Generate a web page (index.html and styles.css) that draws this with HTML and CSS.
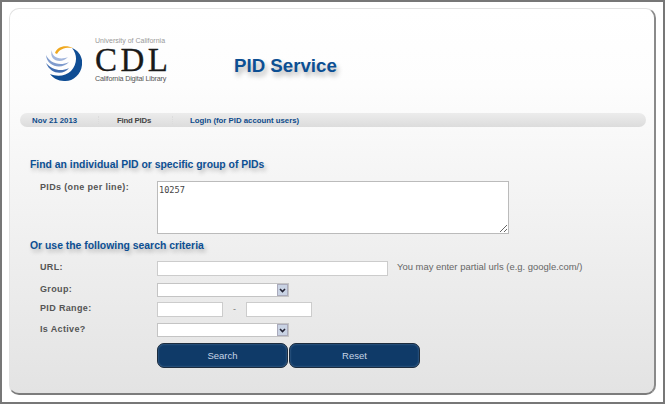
FILE: index.html
```html
<!DOCTYPE html>
<html lang="en">
<head>
    <meta charset="UTF-8">
    <meta name="viewport" content="width=device-width, initial-scale=1.0">
    <title>PID Service</title>
    <link rel="stylesheet" href="styles.css">
</head>
<body>

    <div class="frame">
        <div class="card">
            <div class="header">
                <div class="logo">
                    <svg class="logo-mark" width="37" height="37" viewBox="0 0 37 37">
                        <path d="M10 8 C12 2 20 -1 28 3 C22 2 15 3 12 9 Z" fill="#f0a81e"/>
                        <path d="M27 3 C35 6 38 14 37 20 C36 30 27 37 19 36 C13 36 8 33 5 29 C12 32 21 31 26 26 C32 20 33 10 27 3 Z" fill="#0f4d94"/>
                        <path d="M1 18 C7 25 16 27 24 23 C19 30 6 30 1 18 Z" fill="#3f6cb0"/>
                        <path d="M1 10 C4 17 14 22 24 17 C17 25 2 22 1 10 Z" fill="#7f9bcd"/>
                        <path d="M7 5 C6 11 14 16 23 12 C16 20 3 15 7 5 Z" fill="#a3b6dc"/>
                    </svg>
                    <div class="logo-text">
                        <div class="logo-top">University of California</div>
                        <div class="logo-name">CDL</div>
                        <div class="logo-bottom">California Digital Library</div>
                    </div>
                </div>
                <h1>PID Service</h1>
            </div>

            <div class="nav">
                <span class="nav-date">Nov 21 2013</span>
                <span class="sep"></span>
                <span class="nav-dark">Find PIDs</span>
                <span class="sep"></span>
                <a href="#">Login (for PID account users)</a>
            </div>

            <form class="search">
                <h2>Find an individual PID or specific group of PIDs</h2>
                <div class="row row-area">
                    <label for="pids">PIDs (one per line):</label>
                    <textarea id="pids">10257</textarea>
                </div>

                <h2 class="second">Or use the following search criteria</h2>
                <div class="row row-url">
                    <label for="url">URL:</label>
                    <input type="text" id="url" class="input-url">
                    <span class="hint">You may enter partial urls (e.g. google.com/)</span>
                </div>
                <div class="row row-group">
                    <label for="group">Group:</label>
                    <div class="select-box">
                        <select id="group"></select>
                        <span class="arrow"><svg width="7" height="5" viewBox="0 0 7 5"><path d="M1 1 L3.5 3.5 L6 1" fill="none" stroke="#223" stroke-width="1.6"/></svg></span>
                    </div>
                </div>
                <div class="row row-range">
                    <label for="from">PID Range:</label>
                    <input type="text" id="from" class="input-range">
                    <span class="dash">-</span>
                    <input type="text" id="to" class="input-range">
                </div>
                <div class="row row-active">
                    <label for="active">Is Active?</label>
                    <div class="select-box">
                        <select id="active"></select>
                        <span class="arrow"><svg width="7" height="5" viewBox="0 0 7 5"><path d="M1 1 L3.5 3.5 L6 1" fill="none" stroke="#223" stroke-width="1.6"/></svg></span>
                    </div>
                </div>
                <div class="buttons">
                    <button type="button" class="btn">Search</button>
                    <button type="reset" class="btn">Reset</button>
                </div>
            </form>
        </div>
    </div>

</body>
</html>
```
FILE: styles.css
```css
* {
    box-sizing: border-box;
}
html, body {
    margin: 0;
    height: 100%;
}
body {
    font-family: "Liberation Sans", Arial, sans-serif;
    background: white;
    overflow: hidden;
}
.frame {
    height: 404px;
    border: 2px solid #777;
    padding: 6px 7px;
}
.card {
    height: 387px;
    border: 1px solid #e2e2e2;
    border-right: 2px solid #8a8a8a;
    border-bottom: 2px solid #7c7c7c;
    border-radius: 10px;
    background: linear-gradient(#ffffff, #fdfdfd 20%, #f3f3f3 50%, #e3e3e3);
    padding: 26px 8px 0 10px;
}
.header {
    display: flex;
    align-items: flex-start;
    height: 78px;
}
.logo {
    display: flex;
    width: 214px;
    padding-left: 25px;
}
.logo-mark {
    margin-top: 10px;
    flex: none;
}
.logo-text {
    margin-left: 13px;
    width: 75px;
    padding-top: 1px;
}
.logo-top {
    font-size: 7px;
    line-height: 9px;
    color: #999;
    white-space: nowrap;
}
.logo-name {
    font-family: "Liberation Serif", serif;
    font-size: 33px;
    line-height: 27px;
    letter-spacing: 3.5px;
    color: #1a1a1a;
    -webkit-text-stroke: 0.3px #1a1a1a;
    margin-top: 2px;
}
.logo-bottom {
    font-size: 7.2px;
    line-height: 9px;
    letter-spacing: -0.2px;
    color: #555;
    white-space: nowrap;
}
h1 {
    margin: 20px 0 0;
    font-size: 18.7px;
    line-height: 22px;
    color: #0c4f93;
    text-shadow: 2px 4px 5px rgba(0, 0, 0, 0.3);
}
.nav {
    display: flex;
    align-items: center;
    height: 14px;
    border-radius: 7px;
    background: linear-gradient(#ececec, #dcdcdc);
    padding-left: 12px;
    font-size: 7.8px;
    font-weight: bold;
    color: #0c4a8a;
}
.nav-date {
    width: 66px;
}
.nav-dark {
    width: 55px;
    letter-spacing: -0.2px;
    color: #444;
}
.sep {
    width: 1px;
    height: 8px;
    margin-right: 18px;
    border-left: 1px dotted #dcdcdc;
}
.nav .sep + a {
    margin-left: -1px;
}
.nav a {
    color: #0c4a8a;
    text-decoration: none;
}
.search {
    padding-left: 10px;
}
h2 {
    margin: 31px 0 0;
    font-size: 10.4px;
    line-height: 14px;
    color: #0c4f93;
    text-shadow: 2px 3px 4px rgba(0, 0, 0, 0.25);
}
h2.second {
    margin-top: 5px;
}
.row {
    display: flex;
    align-items: flex-start;
}
.row label {
    width: 117px;
    margin-left: 10px;
    font-size: 9px;
    line-height: 12px;
    font-weight: bold;
    letter-spacing: 0.35px;
    color: #555;
}
.row-area {
    margin-top: 9px;
}
.row-url {
    margin-top: 8px;
}
.row-group {
    margin-top: 7px;
}
.row-range {
    margin-top: 5px;
}
.row-active {
    margin-top: 6px;
}
textarea {
    display: block;
    width: 352px;
    height: 53px;
    padding: 3px 1px;
    border: 1px solid #bbb;
    background: white;
    font-family: "DejaVu Sans Mono", monospace;
    font-size: 8.6px;
    color: #444;
    margin: 0;
}
input[type="text"] {
    height: 15px;
    padding: 0 2px;
    border: 1px solid #ccc;
    background: white;
}
.input-url {
    width: 231px;
}
.hint {
    margin-left: 9px;
    font-size: 9.45px;
    line-height: 12px;
    color: #666;
}
.input-range {
    width: 66px;
}
.dash {
    width: 23px;
    text-align: center;
    font-size: 9px;
    line-height: 15px;
    color: #777;
}
.select-box {
    display: flex;
    width: 132px;
    height: 14px;
    border: 1px solid #c4c4c4;
    background: white;
}
.select-box select {
    appearance: none;
    flex: 1;
    min-width: 0;
    border: 0;
    background: white;
    padding: 0;
}
.arrow {
    display: flex;
    align-items: center;
    justify-content: center;
    width: 11px;
    background: #c9d3e4;
    border: 1px solid #aab;
}
.buttons {
    display: flex;
    gap: 1px;
    margin: 6px 0 0 127px;
}
.btn {
    width: 131px;
    height: 25px;
    padding: 0;
    border: 1px solid #1c2c3e;
    border-radius: 7px;
    background: #0f3a68;
    box-shadow: inset 0 0 2px #5d82a8;
    color: #c6d4e6;
    font-family: "Liberation Sans", Arial, sans-serif;
    font-size: 9.5px;
}
```
